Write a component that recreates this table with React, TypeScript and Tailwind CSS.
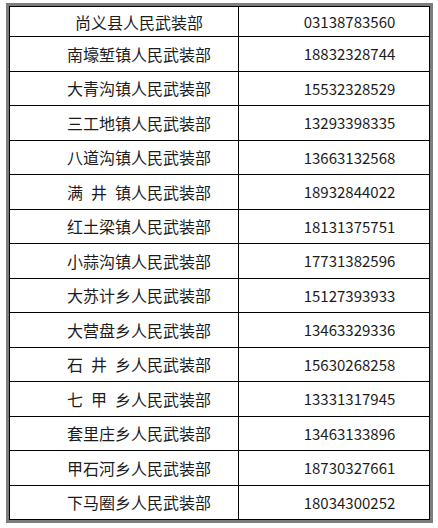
const rows = [
	["尚义县人民武装部", "03138783560"],
	["南壕堑镇人民武装部", "18832328744"],
	["大青沟镇人民武装部", "15532328529"],
	["三工地镇人民武装部", "13293398335"],
	["八道沟镇人民武装部", "13663132568"],
	["满\u2002井\u2002镇人民武装部", "18932844022"],
	["红土梁镇人民武装部", "18131375751"],
	["小蒜沟镇人民武装部", "17731382596"],
	["大苏计乡人民武装部", "15127393933"],
	["大营盘乡人民武装部", "13463329336"],
	["石\u2002井\u2002乡人民武装部", "15630268258"],
	["七\u2002甲\u2002乡人民武装部", "13331317945"],
	["套里庄乡人民武装部", "13463133896"],
	["甲石河乡人民武装部", "18730327661"],
	["下马圈乡人民武装部", "18034300252"],
];

const App = () => {
	return (
		<div className="w-[438px] h-[528px] bg-white pt-[3px] pl-[6px] font-['Noto_Sans_CJK_SC',sans-serif] text-[#1c1c1c]">
			{/* outer frame: gray band + thin black line */}
			<div className="w-[427px] border-[3px] border-[#7d7d7d]">
				<div className="border border-black">
					{rows.map(([name, phone], i) => (
						<div
							key={i}
							className={
								i === 0
									? "grid grid-cols-[228px_1fr] h-[29px]"
									: "grid grid-cols-[228px_1fr] h-[34.5px] border-t border-black"
							}
						>
							<div className="flex items-center justify-center pl-[30px] text-[16px] leading-none whitespace-nowrap">
								{name}
							</div>
							<div className="flex items-center justify-center pl-[31px] border-l border-black text-[15px] leading-none">
								{phone}
							</div>
						</div>
					))}
				</div>
			</div>
		</div>
	);
};

export default App;
